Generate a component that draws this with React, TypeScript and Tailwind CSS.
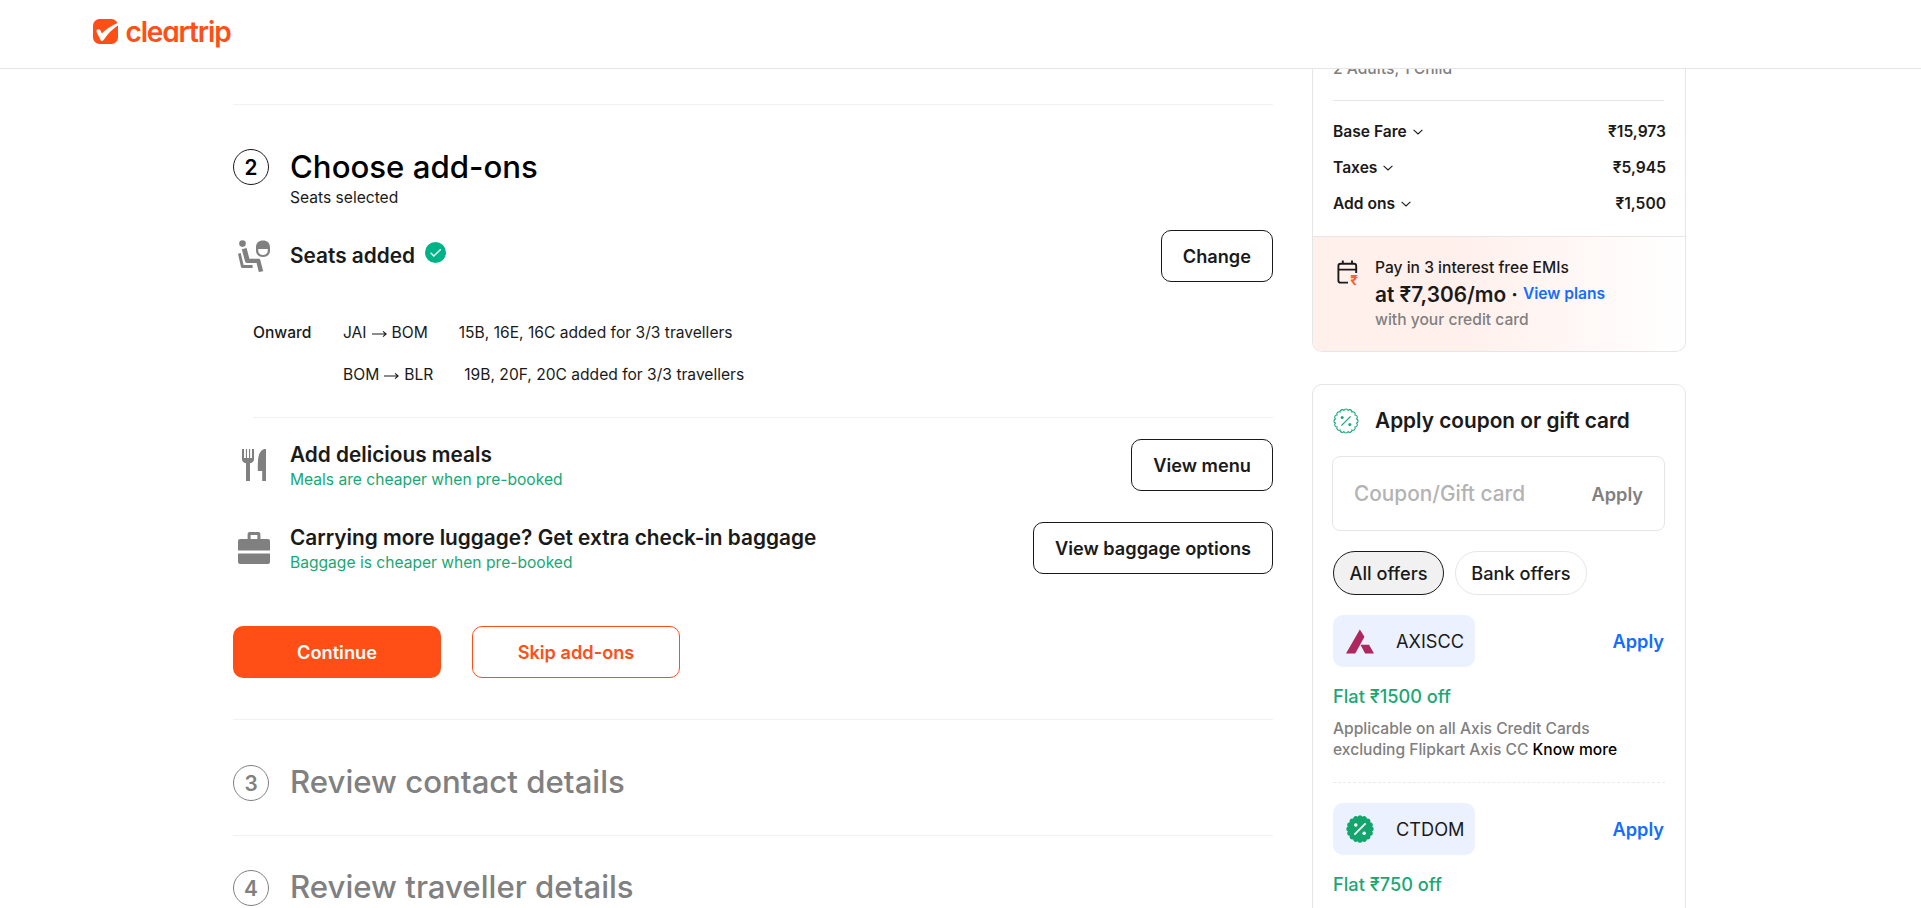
import type { ReactNode } from "react";

function scallop(lobes: number, radius: number, bump: number) {
  const pt = (a: number) => `${(12 + radius * Math.sin(a)).toFixed(2)} ${(12 - radius * Math.cos(a)).toFixed(2)}`;
  const step = (Math.PI * 2) / lobes;
  let d = `M${pt(-step / 2)}`;
  for (let i = 0; i < lobes; i++) d += `A${bump} ${bump} 0 0 1 ${pt(step * (i + 0.5))}`;
  return d + "Z";
}

function Logo() {
  return (
    <div className="flex items-center gap-2">
      <svg className="h-[25px] w-[25px]" viewBox="0 0 25 25">
        <rect width="25" height="25" rx="6.5" fill="#ff4f17" />
        <path
          d="M4.2 10.6Q6.4 9.4 7.5 11.6L8.9 14.6Q14.5 8.4 25 3.8V6.6Q16.5 12 11 20.6Q9 23.4 7.3 20.4L3.8 13.4Q3 11.4 4.2 10.6Z"
          fill="#fff"
        />
      </svg>
      <span className="pt-px text-[28px] leading-8 font-semibold tracking-[-1.15px] text-[#ff4f17] [font-feature-settings:'cv11']">
        cleartrip
      </span>
    </div>
  );
}

function SeatIcon() {
  return (
    <svg className="h-8 w-8 shrink-0" viewBox="0 0 32 32" fill="#808080">
      <circle cx="4.5" cy="3.6" r="3.3" />
      <path d="M3.8 9.2 8.6 8 11.4 18.8H20.8Q22 18.8 22.3 20L25.2 31.2 20.8 32 18.6 23H8.9Q7.5 23 7.1 21.6Z" />
      <path d="M0 13.8 2.7 13 5.6 25H14.6V28H4.3Q3.3 28 3 27Z" />
      <path d="M25 .4C29.2.4 32 3 32 7V10.6C32 14.4 29.2 17 25 17S18 14.4 18 10.6V7C18 3 20.8.4 25 .4ZM20.2 9V10.4C20.2 13.2 22.2 15 25 15S29.8 13.2 29.8 10.4V9Z" fillRule="evenodd" />
    </svg>
  );
}

function MealIcon() {
  return (
    <svg className="h-8 w-8 shrink-0" viewBox="0 0 32 32" fill="#808080">
      <path d="M4 0H6V9H7.9V0H9V9H11V0H12.1V9H14V0H16V10.5Q16 13.4 12 14.2V32H8V14.2Q4 13.4 4 10.5Z" />
      <path d="M28 0V32H24.2V22H19.8V15Q19.8 2 26 0Z" />
    </svg>
  );
}

function BagIcon() {
  return (
    <svg className="h-8 w-8 shrink-0" viewBox="0 0 32 32" fill="#808080">
      <path d="M9.6 7V2Q9.6 0 11.6 0H20.4Q22.4 0 22.4 2V7H30Q32 7 32 9V18.6H0V9Q0 7 2 7ZM12.6 7H19.4V3H12.6Z" fillRule="evenodd" />
      <path d="M0 21.4H32V30Q32 32 30 32H2Q0 32 0 30Z" />
    </svg>
  );
}

function CheckBadge() {
  return (
    <svg className="mb-2 ml-2.5 h-[21px] w-[21px]" viewBox="0 0 21 21" fill="none">
      <circle cx="10.5" cy="10.5" r="10.5" fill="#00b386" />
      <path d="M5.6 10.8 8.9 14 15.8 7.2" stroke="#fff" strokeWidth="1.4" />
    </svg>
  );
}

function Chevron() {
  return (
    <svg className="ml-1.5 h-[6px] w-[10px]" viewBox="0 0 10 6" fill="none">
      <path d="M.6.8 5 5 9.4.8" stroke="#1a1a1a" strokeWidth="1.1" />
    </svg>
  );
}

function Arrow() {
  return (
    <svg className="mx-[5px] mt-[2px] inline-block h-[6px] w-[15px]" viewBox="0 0 15 6" fill="none">
      <path d="M0 3H14M11 .4 14.2 3 11 5.6" stroke="#1a1a1a" strokeWidth="1.1" />
    </svg>
  );
}

function EmiIcon() {
  return (
    <svg className="h-[28px] w-[24px]" viewBox="0 0 24 28" fill="none">
      <path d="M12 22.6H4.6Q2.4 22.6 2.4 20.4V6Q2.4 3.8 4.6 3.8H18Q20.2 3.8 20.2 6V13M2.4 9.6H20.2M6.8 .5V4M16 .5V4" stroke="#1a1a1a" strokeWidth="1.9" />
      <text x="14.2" y="25" fontSize="13.5" fontWeight="700" fill="#ff5b29">₹</text>
    </svg>
  );
}

function PercentOutline() {
  return (
    <svg className="h-[26px] w-[26px]" viewBox="-1 -1 26 26" fill="none">
      <path d={scallop(16, 10.8, 2.25)} stroke="#18a874" strokeWidth="1.1" />
      <path d="M7.4 16.6 16.6 7.4" stroke="#18a874" strokeWidth="1.3" />
      <circle cx="8.2" cy="8.6" r="1.5" fill="#18a874" />
      <circle cx="15.8" cy="15.6" r="1.5" fill="#18a874" />
    </svg>
  );
}

function PercentSolid() {
  return (
    <svg className="h-[28px] w-[28px]" viewBox="0 0 24 24" fill="none">
      <path d={scallop(16, 10.6, 2.25)} fill="#14a56d" />
      <path d="M7.2 16.8 16.8 7.2" stroke="#fff" strokeWidth="1.5" />
      <circle cx="8.4" cy="8.6" r="1.5" fill="#fff" />
      <circle cx="15.6" cy="15.6" r="1.5" fill="#fff" />
    </svg>
  );
}

function AxisIcon() {
  return (
    <svg className="h-[25px] w-[28px]" viewBox="0 0 85 73" fill="#ae275f">
      <path d="M0 73 42 0 56 22 28 73ZM44 46H70L85 73H58Z" />
    </svg>
  );
}

function OutlineButton({ children }: { children: ReactNode }) {
  return (
    <button className="h-[52px] shrink-0 rounded-[10px] border border-[#1a1a1a] px-[21px] pt-px text-[18.2px] font-semibold">
      {children}
    </button>
  );
}

function AddOn({ icon, title, note, action }: { icon: ReactNode; title: string; note: string; action: string }) {
  return (
    <div className="flex h-[52px] items-center">
      <div className="flex w-[57px] pl-[5px]">{icon}</div>
      <div className="flex-1 pt-1">
        <h3 className="text-[20.8px] leading-[26px] font-semibold">{title}</h3>
        <p className="text-[15.6px] leading-6 text-[#18a874]">{note}</p>
      </div>
      <OutlineButton>{action}</OutlineButton>
    </div>
  );
}

function StepNumber({ n, active }: { n: number; active?: boolean }) {
  return (
    <span
      className={`flex h-[36.4px] w-9 shrink-0 items-center justify-center rounded-full border text-[20.8px] font-semibold ${
        active ? "border-[#1a1a1a] text-black" : "border-[#808080] text-[#808080]"
      }`}
    >
      {n}
    </span>
  );
}

function LockedStep({ n, title }: { n: number; title: string }) {
  return (
    <div className="flex h-9 gap-[21px]">
      <StepNumber n={n} />
      <h2 className="text-[31.2px] leading-[34px] font-medium text-[#808080]">{title}</h2>
    </div>
  );
}

function FareRow({ label, value }: { label: string; value: string }) {
  return (
    <div className="flex h-9 items-center justify-between text-[15.6px] font-semibold">
      <span className="flex items-center">
        {label}
        <Chevron />
      </span>
      <span>{value}</span>
    </div>
  );
}

function Offer({ icon, code, deal, children }: { icon: ReactNode; code: string; deal: string; children?: ReactNode }) {
  return (
    <div className="mt-5">
      <div className="flex items-center justify-between">
        <div className="flex h-[52px] w-[142px] items-center rounded-[10px] bg-[#ebf1ff] pl-[13px]">
          <span className="flex w-[50px]">{icon}</span>
          <span className="pt-0.5 text-[18.2px]">{code}</span>
        </div>
        <a className="pt-0.5 pr-px text-[18.2px] font-semibold text-[#136dff]">Apply</a>
      </div>
      <p className="mt-[17px] text-[18.2px] leading-6 font-medium text-[#18a874]">{deal}</p>
      {children}
    </div>
  );
}

export default function App() {
  return (
    <div className="flex h-screen flex-col overflow-hidden bg-white font-['Inter',sans-serif] text-[#1a1a1a]">
      <header className="flex h-[69px] shrink-0 items-center border-b border-[#e6e6e6] pr-4 pb-[5px] pl-[92.5px]">
        <Logo />
      </header>

      <div className="flex min-h-0 flex-1 gap-[39px] overflow-hidden pl-[233px]">
        <main className="w-[1040px] shrink-0 pt-[35px]">
          <div className="h-px bg-[#f1f1f1]" />

          <div className="mt-11 flex h-9 gap-[21px]">
            <StepNumber n={2} active />
            <h2 className="text-[31.2px] leading-9 font-medium text-black">Choose add-ons</h2>
          </div>
          <p className="mt-[3px] pl-[57px] text-[15.6px] leading-5">Seats selected</p>

          <div className="mt-[22px] flex h-[52px] items-center">
            <div className="flex w-[57px] pl-[5px]">
              <SeatIcon />
            </div>
            <h3 className="flex flex-1 items-center text-[20.8px] leading-7 font-semibold">
              Seats added
              <CheckBadge />
            </h3>
            <OutlineButton>Change</OutlineButton>
          </div>

          <div className="mt-[41px] grid grid-cols-[90px_1fr] gap-y-[22px] pl-5 text-[15.6px] leading-5">
            <span className="font-medium">Onward</span>
            <div className="flex gap-[31px]">
              <span className="flex items-center">JAI<Arrow />BOM</span>
              <span>15B, 16E, 16C added for 3/3 travellers</span>
            </div>
            <div className="col-start-2 flex gap-[31px]">
              <span className="flex items-center">BOM<Arrow />BLR</span>
              <span>19B, 20F, 20C added for 3/3 travellers</span>
            </div>
          </div>

          <div className="mt-8 ml-5 h-px bg-[#f1f1f1]" />

          <div className="mt-[21px] flex flex-col gap-[31px]">
            <AddOn icon={<MealIcon />} title="Add delicious meals" note="Meals are cheaper when pre-booked" action="View menu" />
            <AddOn
              icon={<BagIcon />}
              title="Carrying more luggage? Get extra check-in baggage"
              note="Baggage is cheaper when pre-booked"
              action="View baggage options"
            />
          </div>

          <div className="mt-[52px] flex gap-[31px] text-[18.2px] font-semibold">
            <button className="h-[52px] w-[208px] rounded-[10px] bg-[#ff4f17] pt-px text-white">Continue</button>
            <button className="h-[52px] w-[208px] rounded-[10px] border border-[#ff4f17] pt-px text-[#ff4f17]">Skip add-ons</button>
          </div>

          <div className="mt-[41px] mb-[45px] h-px bg-[#f1f1f1]" />
          <LockedStep n={3} title="Review contact details" />
          <div className="my-[34px] h-px bg-[#f1f1f1]" />
          <LockedStep n={4} title="Review traveller details" />
        </main>

        <aside className="w-[374px] shrink-0 overflow-hidden">
          <section className="overflow-hidden rounded-b-[10px] border-x border-b border-[#e6e6e6]">
            <div className="px-5">
              <p className="-mt-[10px] text-[15.6px] leading-5 font-medium text-[#808080]">2 Adults, 1 Child</p>
              <div className="mt-[21px] mr-px mb-[13px] h-px bg-[#e6e6e6]" />
              <div className="-mr-px">
                <FareRow label="Base Fare" value="₹15,973" />
                <FareRow label="Taxes" value="₹5,945" />
                <FareRow label="Add ons" value="₹1,500" />
              </div>
            </div>
            <div className="mt-[14px] flex h-[115px] border-t border-[#e6e6e6] bg-linear-to-r from-[#fff0ec] from-40% to-white pt-[21px] pl-[23px]">
              <div className="w-[39px] pt-0.5">
                <EmiIcon />
              </div>
              <div className="text-[15.6px] leading-5 font-medium">
                <p>Pay in 3 interest free EMIs</p>
                <p className="mt-[3px] mb-px flex h-7 items-center text-[20.8px] font-semibold">
                  at ₹7,306/mo
                  <span className="mx-[5px]">·</span>
                  <a className="pb-0.5 text-[15.6px] text-[#136dff]">View plans</a>
                </p>
                <p className="text-[#808080]">with your credit card</p>
              </div>
            </div>
          </section>

          <section className="mt-8 h-[600px] rounded-t-[10px] border border-[#e6e6e6] px-5 pt-5">
            <div className="flex h-8 items-center">
              <span className="flex w-[42px]">
                <PercentOutline />
              </span>
              <h3 className="text-[20.8px] font-semibold">Apply coupon or gift card</h3>
            </div>
            <div className="mt-[19px] -ml-px flex h-[75px] items-center justify-between rounded-[8px] border border-[#e6e6e6] px-[21px]">
              <span className="text-[20.8px] font-medium text-[#b3b3b3]">Coupon/Gift card</span>
              <span className="pt-0.5 text-[18.2px] font-semibold text-[#808080]">Apply</span>
            </div>
            <div className="mt-5 flex gap-[11px] text-[18.2px] font-medium">
              <button className="h-11 w-[111px] rounded-full border border-[#1a1a1a] bg-[#f1f1f1] pt-px">All offers</button>
              <button className="h-11 w-[132px] rounded-full border border-[#e6e6e6] pt-px">Bank offers</button>
            </div>

            <Offer icon={<AxisIcon />} code="AXISCC" deal="Flat ₹1500 off">
              <p className="mt-[10px] text-[15.6px] leading-[21px] font-medium text-[#808080]">
                Applicable on all Axis Credit Cards
                <br />
                excluding Flipkart Axis CC <a className="text-black">Know more</a>
              </p>
              <div className="mt-[22px] border-t border-dashed border-[#ebebeb]" />
            </Offer>
            <Offer icon={<PercentSolid />} code="CTDOM" deal="Flat ₹750 off" />
          </section>
        </aside>
      </div>
    </div>
  );
}
